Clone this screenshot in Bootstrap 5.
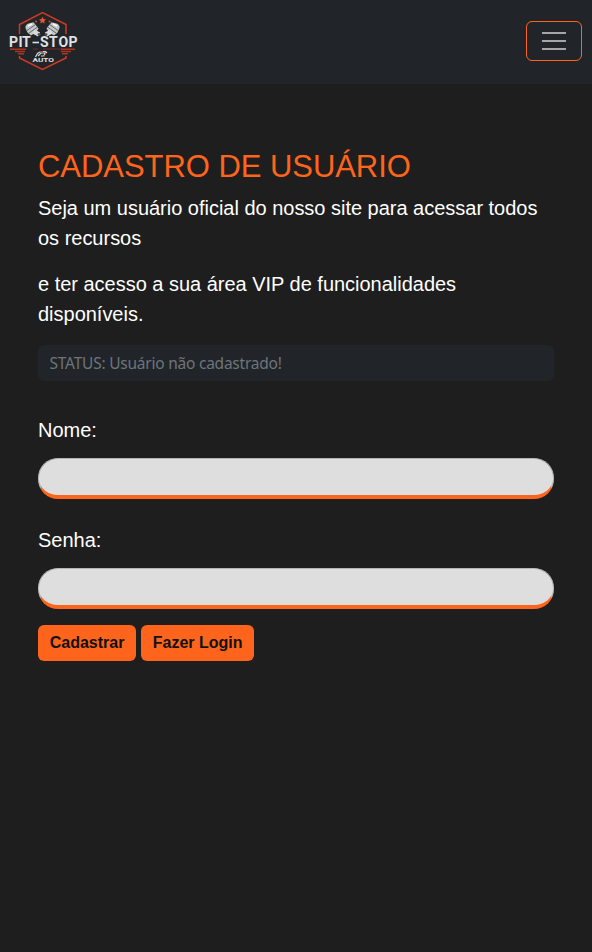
<!DOCTYPE html>
<html lang="pt-BR">
<head>
<meta charset="utf-8">
<meta name="viewport" content="width=device-width, initial-scale=1">
<title>Pit-Stop Auto</title>
<link href="https://cdn.jsdelivr.net/npm/bootstrap@5.3.0/dist/css/bootstrap.min.css" rel="stylesheet">
<style>
body{background:#1e1e1e;color:#fff;font-family:"Liberation Sans",Arial,sans-serif;font-size:20px;line-height:30px}
.topbar{height:84px;background:#212529;padding:0 10px 0 4px}
.topbar .navbar-toggler{width:56px;height:40px;padding:0;border:1px solid #ff641c;border-radius:6px;margin-top:-2px}
.topbar .navbar-toggler svg{display:block;margin:auto}
.signup{padding:63.6px 38px 0}
.signup h1{font-size:31px;line-height:37.4px;color:#ff641c;letter-spacing:-.05px}
.signup p,.pill-label{letter-spacing:-.015px}
.status-field{height:36px;padding:6px 11.5px;background:#212529!important;border:0;border-radius:6px;font:15.5px/24px "Noto Sans","Open Sans",sans-serif;letter-spacing:-.23px}
.status-field::placeholder{color:#6c757d}
.name-group{margin-top:34px}
.pass-group{margin-top:26px}
.pill-field{height:41px;border:1px solid #b5b5b5;border-bottom:4px solid #ff641c;border-radius:20px;background:#dedede}
.pill-label{display:block;margin-bottom:13px}
.actions{gap:5px}
.btn-pit,.btn-pit:hover{height:36px;padding:6px 11.7px;border:0;border-radius:6px;background:#ff641c;color:#111;font-size:16px;line-height:24px;font-weight:700}
</style>
<script src="https://cdn.jsdelivr.net/npm/bootstrap@5.3.0/dist/js/bootstrap.bundle.min.js"></script>
</head>
<body>
<nav class="navbar topbar flex-nowrap justify-content-between align-items-center">
<a class="navbar-brand p-0 m-0" href="#" aria-label="Pit-Stop Auto">
<svg class="d-block" width="80" height="84" viewBox="4 0 80 84">
<g fill="none" stroke="#d13a20" stroke-width="1.5"><path d="M19.500 34V24.500L42.500 12.500L66 24.500V34"/><path d="M19.500 56V58L42.500 69.500L66 58V56"/></g>
<path fill="#e5572a" d="M42.500 16.800l1.100 2.300 2.400.3-1.800 1.700.5 2.400-2.200-1.200-2.200 1.200.5-2.400-1.800-1.700 2.400-.3z"/>
<g fill="#c8452a"><circle cx="36" cy="21.500" r="1.100"/><circle cx="49.500" cy="21.500" r="1.100"/></g>
<g id="piston"><path fill="#c3c5c6" d="M25.500 28q-.5-3 3-4.500l5-1.200 5 6.200-2.500 4-5 3-3.500-3z"/><path d="M27 30.500l8.500-6M29 33l8.500-6" stroke="#4c5053" stroke-width=".8"/><path d="M33.500 31.500l5.500 3" stroke="#d9dada" stroke-width="4.500"/><circle cx="39" cy="34.300" r="1.400" fill="#55595c"/><path d="M28 26l4-2" stroke="#fff" stroke-width="1.500"/></g>
<use href="#piston" transform="matrix(-1 0 0 1 85 0)"/>
<g fill="#e0e1e1" font-family="Roboto,Liberation Sans,sans-serif" font-weight="700"><text x="9 18.500 22" y="47" font-size="14">PIT</text><text x="40 49 58.500 68.500" y="47" font-size="14">STOP</text><text x="32.500" y="62" font-size="5.500" textLength="21.500" lengthAdjust="spacingAndGlyphs">AUTO</text></g>
<path d="M32.500 42.500H39" stroke="#ddd" stroke-width="1.600"/>
<path d="M33 49H38M43 49H61" stroke="#8b2d22" stroke-width=".8"/>
<g stroke="#ad3420" stroke-width="1.600"><path d="M10 49.200H26M15 51.500H25M18 53.700H24M61 49.200H75M61 51.500H71M62 53.700H68"/></g>
<path d="M35.500 57l2-3.500 3-2h5l1.500 1.500M38 56l3-3h4l-1 3h-3" fill="none" stroke="#d5d7d8" stroke-width="1.200"/><path d="M39 51.500h4M43.500 57l3-4" stroke="#b43b2c" stroke-width=".9"/>
</svg>
</a>
<button class="navbar-toggler" type="button" aria-label="Menu"><svg width="24" height="30" viewBox="0 0 24 30"><path d="M0 7h24M0 15h24M0 23h24" stroke="#a4a6a8" stroke-width="2"/></svg></button>
</nav>
<main class="signup">
<h1 class="fw-normal mb-2">CADASTRO DE USUÁRIO</h1>
<p class="mb-3">Seja um usuário oficial do nosso site para acessar todos os recursos</p>
<p class="mb-3">e ter acesso a sua área VIP de funcionalidades disponíveis.</p>
<form>
<input class="form-control status-field" type="text" placeholder="STATUS: Usuário não cadastrado!" aria-label="Status" disabled>
<div class="name-group"><label class="pill-label" for="nome">Nome:</label><input id="nome" type="text" class="form-control pill-field"></div>
<div class="pass-group"><label class="pill-label" for="senha">Senha:</label><input id="senha" type="password" class="form-control pill-field"></div>
<div class="d-flex mt-3 actions"><button type="button" class="btn btn-pit">Cadastrar</button><button type="button" class="btn btn-pit">Fazer Login</button></div>
</form>
</main>
</body>
</html>
